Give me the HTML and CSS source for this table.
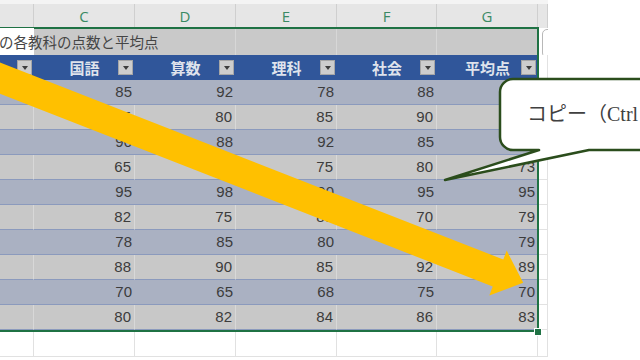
FILE: index.html
```html
<!DOCTYPE html>
<html lang="ja">
<head>
<meta charset="utf-8">
<link rel="stylesheet" href="styles.css">
</head>
<body>
<div class="sheet">
  <div class="row colhdr">
    <div class="c cb"></div>
    <div class="c cc">C</div>
    <div class="c cd">D</div>
    <div class="c ce">E</div>
    <div class="c cf">F</div>
    <div class="c cg">G</div>
    <div class="c ch"></div>
  </div>
  <div class="row title">
    <div class="c cb active"><span class="title-text">の各教科の点数と平均点</span></div>
    <div class="c cc"></div>
    <div class="c cd bl"></div>
    <div class="c ce bl"></div>
    <div class="c cf bl"></div>
    <div class="c cg"></div>
    <div class="c ch"><span class="qa"></span></div>
  </div>
  <div class="row thead">
    <div class="c cb"><span></span><span class="lbl"></span><span class="dd"></span></div>
    <div class="c cc"><span></span><span class="lbl">国語</span><span class="dd"></span></div>
    <div class="c cd"><span></span><span class="lbl">算数</span><span class="dd"></span></div>
    <div class="c ce"><span></span><span class="lbl">理科</span><span class="dd"></span></div>
    <div class="c cf"><span></span><span class="lbl">社会</span><span class="dd"></span></div>
    <div class="c cg"><span></span><span class="lbl">平均点</span><span class="dd"></span></div>
    <div class="c ch"></div>
  </div>
  <div class="row data odd"><div class="c cb"></div><div class="c cc">85</div><div class="c cd">92</div><div class="c ce">78</div><div class="c cf">88</div><div class="c cg">86</div><div class="c ch"></div></div>
  <div class="row data even"><div class="c cb"></div><div class="c cc">75</div><div class="c cd">80</div><div class="c ce">85</div><div class="c cf">90</div><div class="c cg">83</div><div class="c ch"></div></div>
  <div class="row data odd"><div class="c cb"></div><div class="c cc">90</div><div class="c cd">88</div><div class="c ce">92</div><div class="c cf">85</div><div class="c cg">89</div><div class="c ch"></div></div>
  <div class="row data even"><div class="c cb"></div><div class="c cc">65</div><div class="c cd">72</div><div class="c ce">75</div><div class="c cf">80</div><div class="c cg">73</div><div class="c ch"></div></div>
  <div class="row data odd"><div class="c cb"></div><div class="c cc">95</div><div class="c cd">98</div><div class="c ce">90</div><div class="c cf">95</div><div class="c cg">95</div><div class="c ch"></div></div>
  <div class="row data even"><div class="c cb"></div><div class="c cc">82</div><div class="c cd">75</div><div class="c ce">89</div><div class="c cf">70</div><div class="c cg">79</div><div class="c ch"></div></div>
  <div class="row data odd"><div class="c cb"></div><div class="c cc">78</div><div class="c cd">85</div><div class="c ce">80</div><div class="c cf">73</div><div class="c cg">79</div><div class="c ch"></div></div>
  <div class="row data even"><div class="c cb"></div><div class="c cc">88</div><div class="c cd">90</div><div class="c ce">85</div><div class="c cf">92</div><div class="c cg">89</div><div class="c ch"></div></div>
  <div class="row data odd"><div class="c cb"></div><div class="c cc">70</div><div class="c cd">65</div><div class="c ce">68</div><div class="c cf">75</div><div class="c cg">70</div><div class="c ch"></div></div>
  <div class="row data even"><div class="c cb"></div><div class="c cc">80</div><div class="c cd">82</div><div class="c ce">84</div><div class="c cf">86</div><div class="c cg">83</div><div class="c ch"></div></div>
  <div class="row blank tall"><div class="c cb"></div><div class="c cc"></div><div class="c cd"></div><div class="c ce"></div><div class="c cf"></div><div class="c cg"></div><div class="c ch"></div></div>
</div>

<div class="sel"></div>
<div class="fh"></div>

<svg class="overlay" width="640" height="360" viewBox="0 0 640 360" xmlns="http://www.w3.org/2000/svg">
  <polygon fill="#ffc000" points="-54.7,41.1 503.3,259.5 506.7,250.6 523.2,282.8 489.3,295.4 492.7,286.5 -65.3,68.1"/>
  <path fill="#ffffff" stroke="#2b4d1c" stroke-width="2.5" stroke-linejoin="round"
        d="M513,79 H680 V150 H589 L445,180 L539,150 H513 A13,13 0 0 1 500,137 V92 A13,13 0 0 1 513,79 Z"/>
</svg>
<div class="callout-clip"><span class="callout-text">コピー（Ctrl</span></div>
</body>
</html>
```

FILE: styles.css
```css
html, body {
  margin: 0;
  padding: 0;
}
body {
  width: 640px;
  height: 360px;
  overflow: hidden;
  background: #ffffff;
  position: relative;
  font-family: "Liberation Sans", Arial, "Noto Sans CJK JP", sans-serif;
}
.sheet {
  width: 548px;
}
.row {
  display: flex;
  height: 25px;
}
.c {
  box-sizing: border-box;
  flex: none;
  height: 100%;
}
.cb { width: 34px; }
.cc, .cd, .ce, .cg { width: 101px; }
.cf { width: 100px; }
.ch { width: 10px; }

/* column letters */
.colhdr {
  height: 28px;
  padding-top: 4px;
  box-sizing: border-box;
  background: #f4f4f4;
}
.colhdr .c {
  background: #e6e6e6;
  border-right: 1px solid #cfcfcf;
  color: #3a8a64;
  font-size: 15px;
  line-height: 24px;
  text-align: center;
  font-family: "Open Sans", "Liberation Sans", sans-serif;
}

/* title row */
.title {
  height: 27px;
}
.title .c {
  background: #c9c9c9;
}
.title .c.bl {
  border-right: 1px solid #d7d7d7;
}
.title .c.active {
  background: #ffffff;
  position: relative;
  z-index: 1;
  white-space: nowrap;
}
.title .ch {
  background: #ffffff;
  position: relative;
  overflow: hidden;
}
.title-text {
  font-family: "Noto Sans CJK JP", sans-serif;
  font-size: 14.5px;
  line-height: 27px;
  color: #454545;
  margin-left: -1px;
}
.qa {
  position: absolute;
  left: 4px;
  top: 1px;
  width: 14px;
  height: 27px;
  border: 1px solid #b8b8b8;
  border-radius: 5px;
  background: #ffffff;
}

/* table header */
.thead .c {
  background: #30569a;
  display: grid;
  grid-template-columns: 1fr auto 1fr;
  align-items: center;
}
.thead .ch {
  background: #ffffff;
  border-bottom: 1px solid #e2e2e2;
  border-right: 1px solid #e2e2e2;
}
.lbl {
  font-family: "Noto Sans CJK JP", sans-serif;
  font-weight: bold;
  font-size: 15px;
  color: #dfe3ec;
  line-height: 20px;
}
.dd {
  justify-self: end;
  margin-right: 2px;
  width: 15px;
  height: 15px;
  box-sizing: border-box;
  background: #cdcdcd;
  border: 1px solid #a6a6a6;
  display: flex;
  align-items: center;
  justify-content: center;
}
.dd::after {
  content: "";
  display: block;
  width: 0;
  height: 0;
  border-left: 3.5px solid transparent;
  border-right: 3.5px solid transparent;
  border-top: 4px solid #3d3d3d;
  margin-top: 1px;
}

/* data rows */
.data .c {
  text-align: right;
  padding-right: 3px;
  font-size: 15px;
  line-height: 24px;
  color: #3c3c3c;
  border-bottom: 1px solid #8b9abd;
}
.data.odd .c { background: #aab1c2; }
.data.even .c { background: #c8c8c8; }
.data.even .cb, .data.even .cc, .data.even .cd, .data.even .ce, .data.even .cf {
  border-right: 1px solid #d8d8d8;
}
.data .ch, .data.odd .ch, .data.even .ch {
  background: #ffffff;
  border-bottom: 1px solid #e2e2e2;
  border-right: 1px solid #e2e2e2;
}

/* empty rows */
.blank.tall { height: 27px; }
.blank .c {
  border-right: 1px solid #e1e1e1;
  border-bottom: 1px solid #e1e1e1;
}

/* selection */
.sel {
  position: absolute;
  left: -3px;
  top: 27px;
  width: 542px;
  height: 305px;
  border: 2px solid #1f7244;
  box-sizing: border-box;
}
.fh {
  position: absolute;
  left: 534px;
  top: 328px;
  width: 6px;
  height: 6px;
  background: #1f7244;
  border: 1px solid #ffffff;
}

.overlay {
  position: absolute;
  left: 0;
  top: 0;
}
.callout-clip {
  position: absolute;
  left: 527px;
  top: 101px;
  width: 113px;
  height: 28px;
  overflow: hidden;
}
.callout-text {
  display: block;
  white-space: nowrap;
  font-family: "Liberation Serif", "Noto Sans CJK JP", serif;
  font-size: 20px;
  line-height: 26px;
  color: #404040;
}
```
